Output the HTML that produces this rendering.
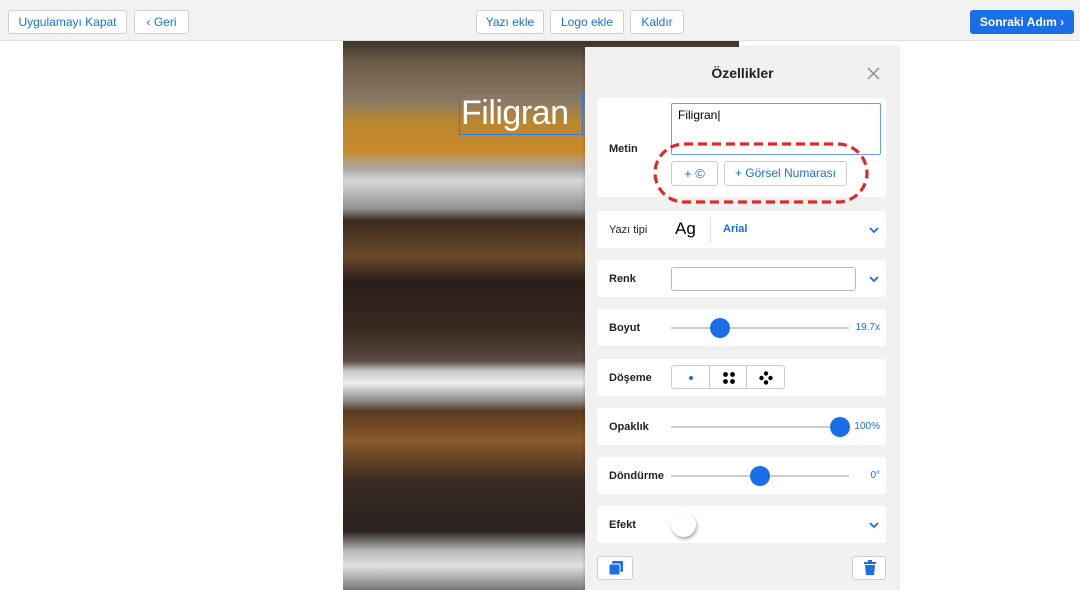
<!DOCTYPE html>
<html><head><meta charset="utf-8"><style>
*{box-sizing:border-box;margin:0;padding:0}
body{width:1080px;height:590px;overflow:hidden;background:#fff;font-family:"Liberation Sans",Arial,sans-serif;position:relative}
.top{position:absolute;left:0;top:0;width:1080px;height:41px;background:#f2f2f2;border-bottom:1px solid #e2e2e2}
.btn{position:absolute;top:10px;height:24px;background:#fff;border:1px solid #d0d0d0;border-radius:3px;color:#1a6fe8;font-size:12px;line-height:22px;text-align:center}
.prim{background:#1a6fe8;color:#fff;border-color:#1a6fe8}
.img{position:absolute;left:343px;top:41px;width:396px;height:549px;overflow:hidden;
background:linear-gradient(180deg,#3c332a 0px,#6b5a48 20px,#8a7a66 60px,#b8862e 80px,#c98a2a 110px,#a8a8a8 128px,#d8d8d8 140px,#8f8f8f 168px,#3a2a1e 180px,#6b4a2a 215px,#2a1e18 240px,#3a2a22 290px,#5a4a40 320px,#c8c8c8 330px,#eeeeee 342px,#8a8a8a 360px,#5a3a20 370px,#8a5a2a 400px,#3a2a22 440px,#2a2220 490px,#bbb 510px,#e0e0e0 525px,#777 549px)}
.panel{position:absolute;left:585px;top:47px;width:315px;height:543px;background:#f1f1f1;box-shadow:-1px 0 3px rgba(0,0,0,.15)}
.card{position:absolute;left:12px;width:289px;background:#fff;border-radius:3px}
.lbl{position:absolute;left:12px;font-size:11px;font-weight:bold;color:#222}
.slider{position:absolute;left:74px;height:2px;background:#ccc;width:178px}
.knob{position:absolute;width:20px;height:20px;border-radius:50%;background:#1a6fe8}
.val{position:absolute;right:6px;font-size:10px;color:#1a6fe8}
.chev{position:absolute;right:6px;width:12px;height:8px}
</style></head><body>
<div class="top">
<div class="btn" style="left:8px;width:119px">Uygulamayı Kapat</div>
<div class="btn" style="left:134px;width:55px">&#8249; Geri</div>
<div class="btn" style="left:476px;width:68px">Yazı ekle</div>
<div class="btn" style="left:550px;width:74px">Logo ekle</div>
<div class="btn" style="left:630px;width:54px">Kaldır</div>
<div class="btn prim" style="left:970px;width:104px;font-weight:bold">Sonraki Adım &#8250;</div>
</div>
<div class="img">
<div style="position:absolute;left:116px;top:50px;width:124px;height:44px;border:1px solid #2a7af0"></div>
<div style="position:absolute;left:118px;top:50px;font-size:34px;color:#fff;line-height:44px;letter-spacing:-0.5px">Filigran</div>
</div>
<div class="panel">
<div style="position:absolute;top:18px;width:100%;text-align:center;font-weight:bold;font-size:14px;color:#222">Özellikler</div>
<svg style="position:absolute;right:20px;top:20px" width="13" height="13" viewBox="0 0 13 13"><path d="M1 1l11 11M12 1L1 12" stroke="#999" stroke-width="1.6"/></svg>
<div class="card" style="top:51px;height:99px">
<div class="lbl" style="top:45px">Metin</div>
<div style="position:absolute;left:74px;top:5px;width:210px;height:52px;border:1px solid #6a9ee8;border-radius:2px;font-size:12px;padding:4px 6px">Filigran|</div>
<div style="position:absolute;left:74px;top:63px;width:47px;height:25px;border:1px solid #ccc;border-radius:3px;color:#1a6fe8;font-size:13px;text-align:center;line-height:23px">+ ©</div>
<div style="position:absolute;left:127px;top:63px;width:123px;height:25px;border:1px solid #ccc;border-radius:3px;color:#1a6fe8;font-size:12px;text-align:center;line-height:23px">+ Görsel Numarası</div>
<svg style="position:absolute;left:56px;top:44px" width="216" height="62" viewBox="0 0 216 62"><rect x="2" y="2" width="212" height="58" rx="29" fill="none" stroke="#e02a2a" stroke-width="3.2" stroke-dasharray="9 5"/></svg>
</div>
<div class="card" style="top:164px;height:37px">
<div class="lbl" style="top:13px;font-weight:normal">Yazı tipi</div>
<div style="position:absolute;left:78px;top:8px;font-size:17px">Ag</div>
<div style="position:absolute;left:113px;top:6px;width:1px;height:25px;background:#ddd"></div>
<div style="position:absolute;left:126px;top:12px;font-size:11px;font-weight:bold;color:#1a6fe8">Arial</div>
<svg class="chev" style="top:15px" viewBox="0 0 12 8"><path d="M2 2l4 4 4-4" stroke="#1a6fe8" stroke-width="1.8" fill="none"/></svg>
</div>
<div class="card" style="top:213px;height:37px">
<div class="lbl" style="top:13px">Renk</div>
<div style="position:absolute;left:74px;top:7px;width:185px;height:24px;border:1px solid #bbb;border-radius:3px"></div>
<svg class="chev" style="top:15px" viewBox="0 0 12 8"><path d="M2 2l4 4 4-4" stroke="#1a6fe8" stroke-width="1.8" fill="none"/></svg>
</div>
<div class="card" style="top:262px;height:37px">
<div class="lbl" style="top:13px">Boyut</div>
<div class="slider" style="top:18px"></div><div class="knob" style="left:113px;top:9px"></div>
<div class="val" style="top:13px">19.7x</div>
</div>
<div class="card" style="top:312px;height:37px">
<div class="lbl" style="top:13px">Döşeme</div>
<div style="position:absolute;left:74px;top:6px;width:114px;height:24px;border:1px solid #ccc;border-radius:3px;display:flex">
<div style="flex:1;border-right:1px solid #ccc;position:relative"><span style="position:absolute;left:17px;top:10px;width:4px;height:4px;border-radius:50%;background:#1a6fe8"></span></div>
<div style="flex:1;border-right:1px solid #ccc;position:relative"><svg style="position:absolute;left:12px;top:5px" width="14" height="14" viewBox="0 0 14 14"><circle cx="3.5" cy="3.5" r="2.4"/><circle cx="10.5" cy="3.5" r="2.4"/><circle cx="3.5" cy="10.5" r="2.4"/><circle cx="10.5" cy="10.5" r="2.4"/></svg></div>
<div style="flex:1;position:relative"><svg style="position:absolute;left:12px;top:5px" width="14" height="14" viewBox="0 0 14 14"><circle cx="7" cy="2.5" r="2.2"/><circle cx="2.5" cy="7" r="2.2"/><circle cx="11.5" cy="7" r="2.2"/><circle cx="7" cy="11.5" r="2.2"/></svg></div>
</div>
</div>
<div class="card" style="top:361px;height:37px">
<div class="lbl" style="top:13px">Opaklık</div>
<div class="slider" style="top:18px"></div><div class="knob" style="left:233px;top:9px"></div>
<div class="val" style="top:13px">100%</div>
</div>
<div class="card" style="top:410px;height:37px">
<div class="lbl" style="top:13px">Döndürme</div>
<div class="slider" style="top:18px"></div><div class="knob" style="left:153px;top:9px"></div>
<div class="val" style="top:13px">0°</div>
</div>
<div class="card" style="top:459px;height:37px">
<div class="lbl" style="top:13px">Efekt</div>
<div style="position:absolute;left:74px;top:6px;width:25px;height:25px;border-radius:50%;background:#fff;box-shadow:1px 2px 3px rgba(0,0,0,.35)"></div>
<svg class="chev" style="top:15px" viewBox="0 0 12 8"><path d="M2 2l4 4 4-4" stroke="#1a6fe8" stroke-width="1.8" fill="none"/></svg>
</div>
<div style="position:absolute;left:12px;top:509px;width:36px;height:24px;background:#fff;border:1px solid #ccc;border-radius:3px">
<svg width="16" height="16" viewBox="0 0 16 16" style="position:absolute;left:10px;top:3px"><rect x="4" y="1" width="11" height="11" rx="1.5" fill="#1a6fe8"/><rect x="1" y="4" width="11" height="11" rx="1.5" fill="#1a6fe8" stroke="#fff" stroke-width="1"/></svg></div>
<div style="position:absolute;left:267px;top:509px;width:34px;height:24px;background:#fff;border:1px solid #ccc;border-radius:3px">
<svg width="14" height="16" viewBox="0 0 14 16" style="position:absolute;left:10px;top:3px"><rect x="1" y="2" width="12" height="2" fill="#1a6fe8"/><rect x="5" y="0" width="4" height="2" fill="#1a6fe8"/><path d="M2 5h10l-1 10H3z" fill="#1a6fe8"/></svg></div>
</div>
</body></html>
